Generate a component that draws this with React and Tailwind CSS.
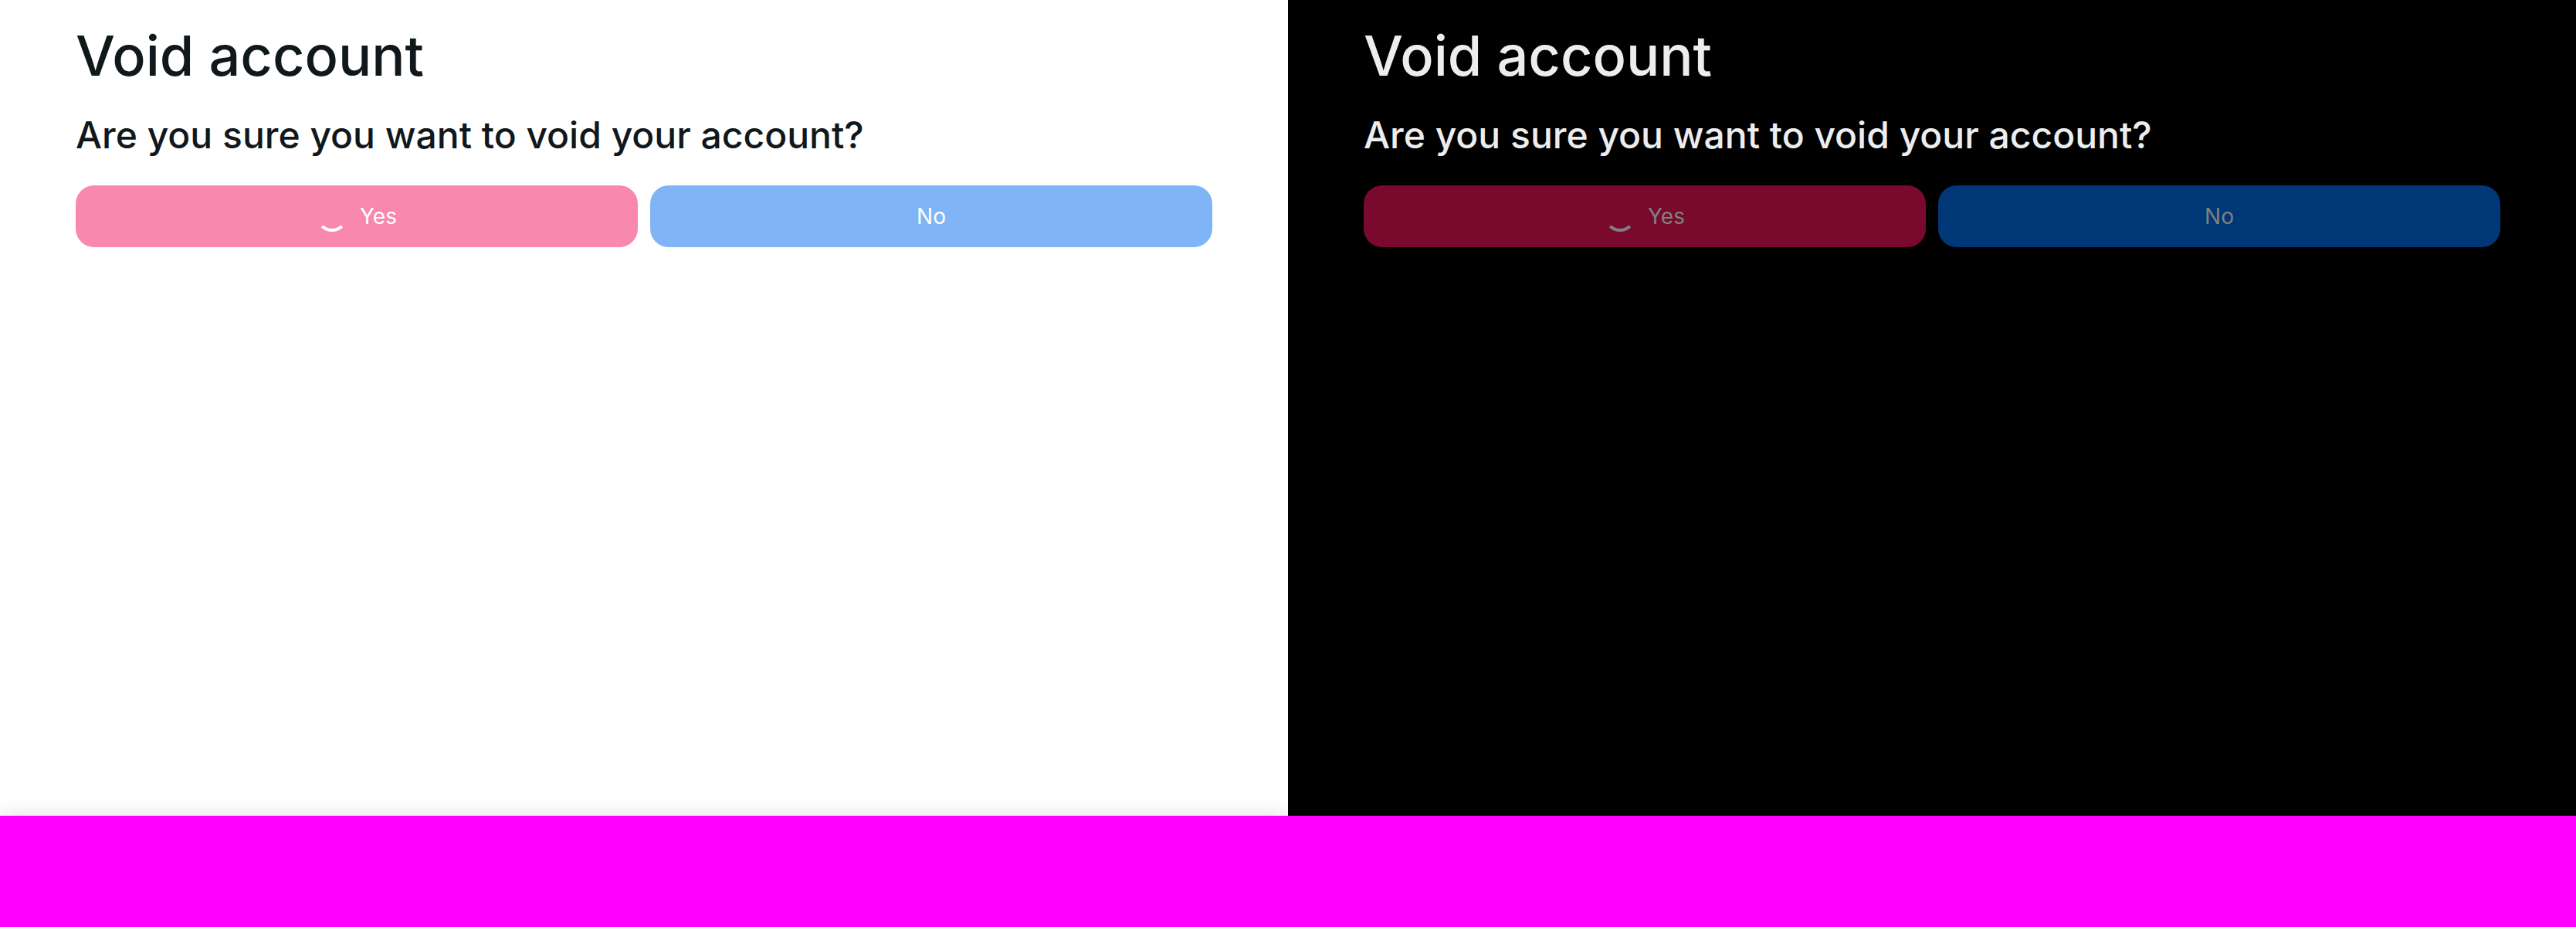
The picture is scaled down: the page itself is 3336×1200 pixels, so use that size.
function Panel({ panel, yes, no, label, shadow }) {
  return (
    <section className={"relative h-[1056px] w-[1668px] overflow-hidden px-[98px] pt-8 " + panel}>
      <h1 className="h-20 text-[72px] leading-[80px] font-medium">Void account</h1>
      <p className="mt-8 h-16 text-[48px] leading-[62px] font-medium">Are you sure you want to void your account?</p>
      <div className={"mt-8 grid grid-cols-2 gap-4 text-[28px] leading-10 " + label}>
        <button className={"flex h-20 items-center justify-center gap-4 rounded-[24px] " + yes}>
          <span className="size-10 rounded-full border-4 border-transparent border-b-current" />
          Yes
        </button>
        <button className={"flex h-20 items-center justify-center rounded-[24px] " + no}>No</button>
      </div>
      {shadow && (
        <div className="absolute inset-x-0 top-full h-36 shadow-[0_0_24px_rgb(0_0_0/0.14)]" />
      )}
    </section>
  );
}

export default function App() {
  return (
    <main className="h-[1200px] w-[3336px] overflow-hidden bg-[#ff00ff] font-['Inter',sans-serif]">
      <div className="flex">
        <Panel panel="bg-white text-[#11181c]" yes="bg-[#f888ad]" no="bg-[#7fb5f6]" label="text-white" shadow />
        <Panel panel="bg-black text-[#ecedee]" yes="bg-[#790a2d]" no="bg-[#003777]" label="text-[#808080]" />
      </div>
    </main>
  );
}
